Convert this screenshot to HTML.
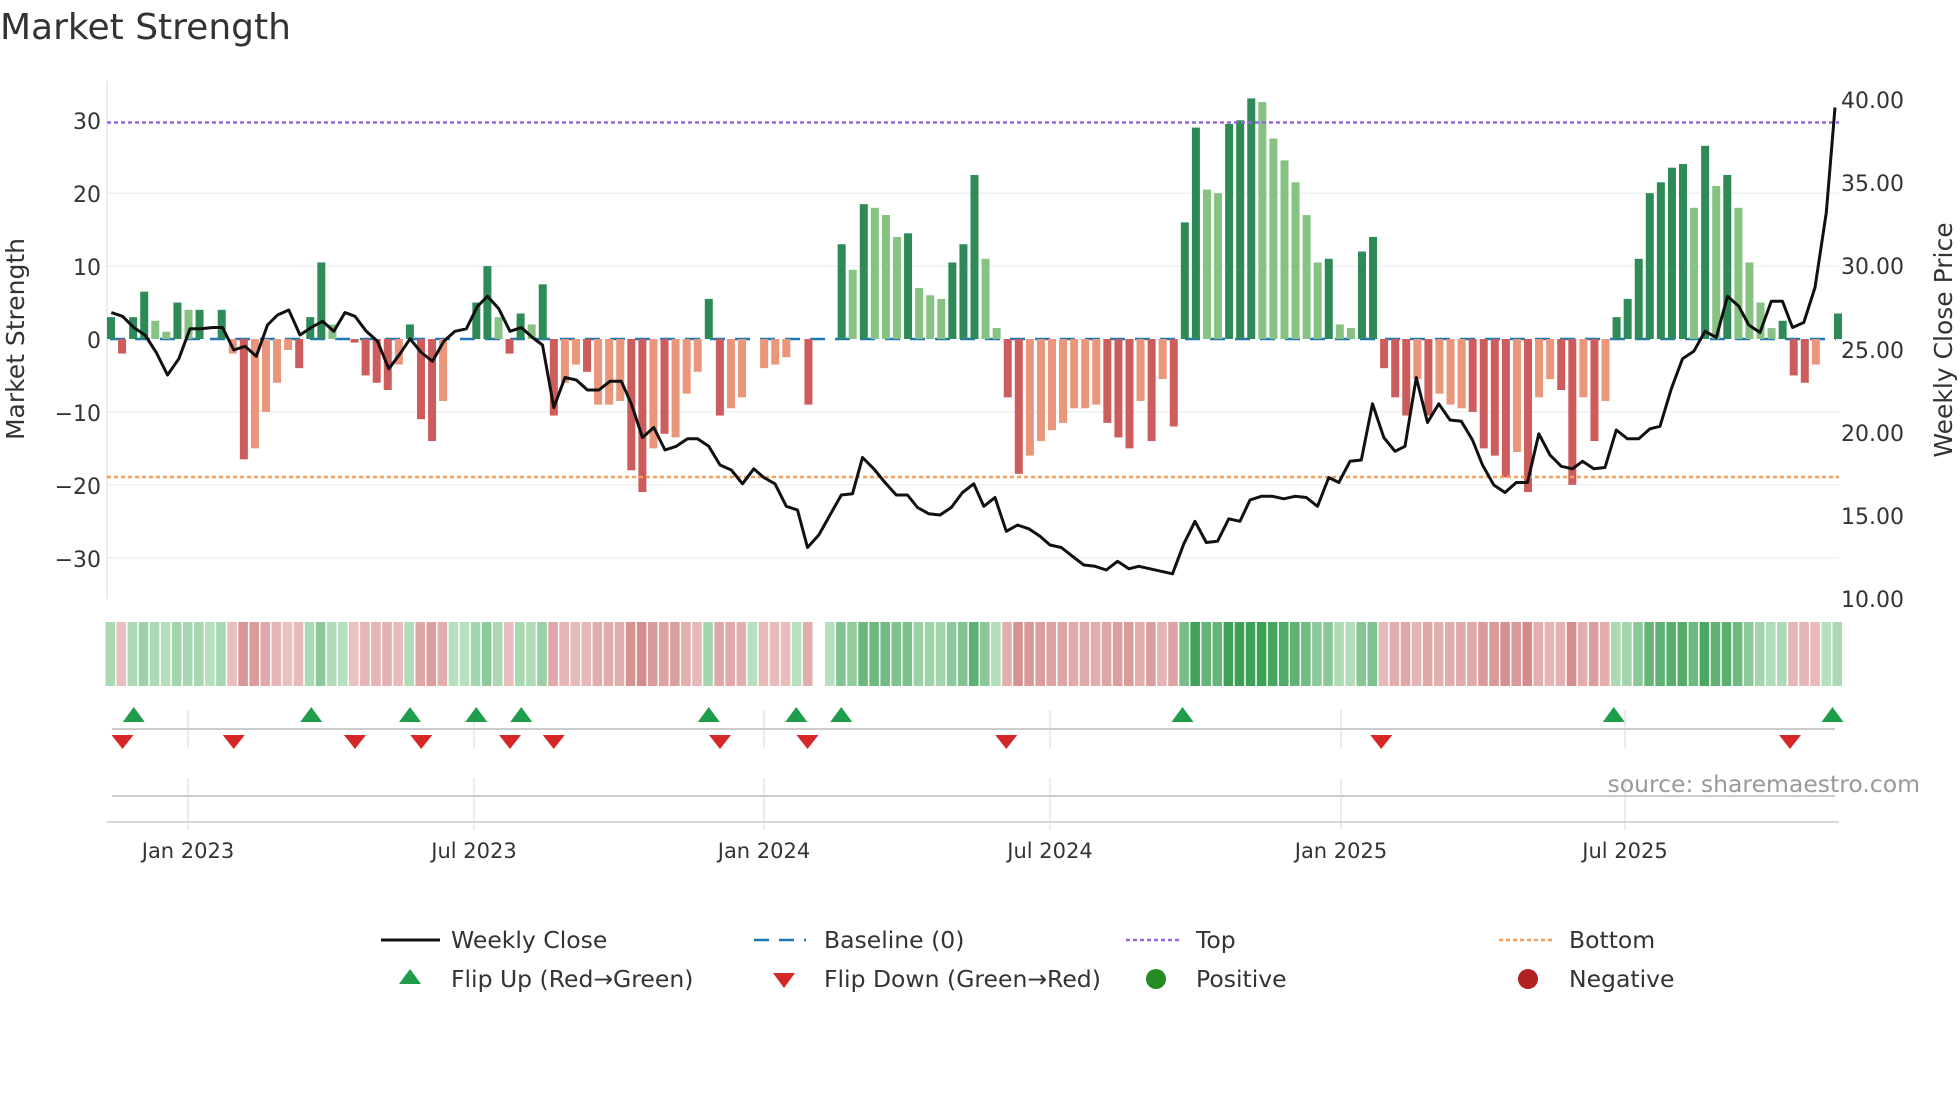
<!DOCTYPE html>
<html><head><meta charset="utf-8"><style>
html,body{margin:0;padding:0;background:#fff;width:1960px;height:1102px;overflow:hidden}
svg{display:block;font-family:"DejaVu Sans","Liberation Sans",sans-serif}
</style></head><body>
<svg id="s" width="1960" height="1102" viewBox="0 0 1960 1102">
<text x="0" y="39" font-size="36" fill="#333">Market Strength</text>
<g id="grid"></g>
<g id="bars"></g>
<g id="heat"></g>
<g id="mk"></g>
<g font-size="22" fill="#333">
<text x="101" y="129" text-anchor="end">30</text>
<text x="101" y="202" text-anchor="end">20</text>
<text x="101" y="275" text-anchor="end">10</text>
<text x="101" y="348" text-anchor="end">0</text>
<text x="101" y="421" text-anchor="end">−10</text>
<text x="101" y="494" text-anchor="end">−20</text>
<text x="101" y="567" text-anchor="end">−30</text>
<text x="1841" y="108">40.00</text>
<text x="1841" y="191">35.00</text>
<text x="1841" y="274">30.00</text>
<text x="1841" y="358">25.00</text>
<text x="1841" y="441">20.00</text>
<text x="1841" y="524">15.00</text>
<text x="1841" y="607">10.00</text>
</g>
<g font-size="21" fill="#333" text-anchor="middle">
<text x="188" y="858">Jan 2023</text>
<text x="474" y="858">Jul 2023</text>
<text x="764" y="858">Jan 2024</text>
<text x="1050" y="858">Jul 2024</text>
<text x="1341" y="858">Jan 2025</text>
<text x="1625" y="858">Jul 2025</text>
</g>
<text transform="translate(24,339) rotate(-90)" font-size="25" fill="#333" text-anchor="middle">Market Strength</text>
<text transform="translate(1952,340) rotate(-90)" font-size="25" fill="#333" text-anchor="middle">Weekly Close Price</text>
<text x="1920" y="792" font-size="23.5" fill="#999" text-anchor="end">source: sharemaestro.com</text>
<g font-size="23.5" fill="#333">
<line x1="381" y1="940" x2="440" y2="940" stroke="#111" stroke-width="3"/>
<text x="451" y="948">Weekly Close</text>
<line x1="754" y1="940" x2="806" y2="940" stroke="#1f77b4" stroke-width="2.5" stroke-dasharray="15,10"/>
<text x="824" y="948">Baseline (0)</text>
<line x1="1126" y1="940" x2="1181" y2="940" stroke="#9467dd" stroke-width="2.5" stroke-dasharray="4,3"/>
<text x="1196" y="948">Top</text>
<line x1="1499" y1="940" x2="1554" y2="940" stroke="#f4a05a" stroke-width="2.5" stroke-dasharray="4,3"/>
<text x="1569" y="948">Bottom</text>
<polygon points="410,969 399,984 421,984" fill="#1e9e4a"/>
<text x="451" y="987">Flip Up (Red→Green)</text>
<polygon points="773,973 795,973 784,988" fill="#d62728"/>
<text x="824" y="987">Flip Down (Green→Red)</text>
<circle cx="1156" cy="979" r="10" fill="#228b22"/>
<text x="1196" y="987">Positive</text>
<circle cx="1528" cy="979" r="10" fill="#b22222"/>
<text x="1569" y="987">Negative</text>
</g>
<polyline id="price" fill="none" stroke="#111" stroke-width="3" stroke-linejoin="round"/>
</svg>
<script>
var NS="http://www.w3.org/2000/svg";
function el(p,t,a){var e=document.createElementNS(NS,t);for(var k in a)e.setAttribute(k,a[k]);document.getElementById(p).appendChild(e);return e;}
var Y=function(v){return 339-v*7.29;};
[20,10,-10,-20,-30].forEach(function(v){el("grid","line",{x1:107,x2:1839,y1:Y(v),y2:Y(v),stroke:"#eef0f2","stroke-width":1.5});});
el("grid","line",{x1:107,x2:107,y1:81,y2:599,stroke:"#e6e6e6","stroke-width":1.5});
[188,474,764,1050,1341,1625].forEach(function(x){
 el("grid","line",{x1:x,x2:x,y1:710,y2:748,stroke:"#e6e6e6","stroke-width":1.5});
 el("grid","line",{x1:x,x2:x,y1:778,y2:830,stroke:"#e6e6e6","stroke-width":1.5});});
el("grid","line",{x1:112,x2:1835,y1:729,y2:729,stroke:"#ccc","stroke-width":2});
el("grid","line",{x1:112,x2:1835,y1:796,y2:796,stroke:"#ccc","stroke-width":2});
el("grid","line",{x1:107,x2:1839,y1:822,y2:822,stroke:"#ccc","stroke-width":1.5});
var d=[[3,1],[-2,1],[3,1],[6.5,1],[2.5,0],[1,0],[5,1],[4,0],[4,1],[0,0],[4,1],[-2,0],[-16.5,1],[-15,0],[-10,0],[-6,0],[-1.5,0],[-4,1],[3,1],[10.5,1],[2,0],[0,0],[-0.5,1],[-5,1],[-6,1],[-7,1],[-3.5,0],[2,1],[-11,1],[-14,1],[-8.5,0],[0,0],[0,0],[5,1],[10,1],[3,0],[-2,1],[3.5,1],[2,0],[7.5,1],[-10.5,1],[-6,0],[-3.5,0],[-4.5,1],[-9,0],[-9,0],[-8.5,0],[-18,1],[-21,1],[-15,0],[-13,1],[-13.5,0],[-7.5,0],[-4.5,0],[5.5,1],[-10.5,1],[-9.5,0],[-8,0],[0,0],[-4,0],[-3.5,0],[-2.5,0],[0,0],[-9,1],[null,0],[0,0],[13,1],[9.5,0],[18.5,1],[18,0],[17,0],[14,0],[14.5,1],[7,0],[6,0],[5.5,0],[10.5,1],[13,1],[22.5,1],[11,0],[1.5,0],[-8,1],[-18.5,1],[-16,0],[-14,0],[-12.5,0],[-11.5,0],[-9.5,0],[-9.5,0],[-9,0],[-11.5,1],[-13.5,1],[-15,1],[-8.5,0],[-14,1],[-5.5,0],[-12,1],[16,1],[29,1],[20.5,0],[20,0],[29.5,1],[30,1],[33,1],[32.5,0],[27.5,0],[24.5,0],[21.5,0],[17,0],[10.5,0],[11,1],[2,0],[1.5,0],[12,1],[14,1],[-4,1],[-8,1],[-10.5,1],[-5.5,0],[-10.5,1],[-7.5,0],[-9,0],[-9.5,0],[-10,1],[-15,1],[-16,1],[-19,1],[-15.5,0],[-21,1],[-8,0],[-5.5,0],[-7,1],[-20,1],[-8,0],[-14,1],[-8.5,0],[3,1],[5.5,1],[11,1],[20,1],[21.5,1],[23.5,1],[24,1],[18,0],[26.5,1],[21,0],[22.5,1],[18,0],[10.5,0],[5,0],[1.5,0],[2.5,1],[-5,1],[-6,1],[-3.5,0],[0,0],[3.5,1]];
var n=d.length,x0=111,x1=1838,dx=(x1-x0)/(n-1);
el("bars","line",{x1:110,x2:1836,y1:339,y2:339,stroke:"#1f77b4","stroke-width":2.5,"stroke-dasharray":"15,10"});
d.forEach(function(r,i){
 var v=r[0],x=x0+i*dx;
 if(v===null)return;
 if(v!==0){
  var c=v>0?(r[1]?"#2e8b57":"#86c282"):(r[1]?"#cd5c5c":"#e9967a");
  var y=Math.min(Y(v),339),h=Math.abs(v)*7.29;
  el("bars","rect",{x:x-4,y:y,width:8,height:h,fill:c});
 }
 var t=Math.min(Math.abs(v)/30,1),col;
 if(v>=0){var a=[205,235,209],b=[60,160,85];}else{var a=[242,210,210],b=[200,115,115];}
 col="rgb("+a.map(function(q,k){return Math.round(q+(b[k]-q)*(0.15+0.85*t));}).join(",")+")";
 el("heat","rect",{x:x-dx/2,y:622,width:dx-1.5,height:64,fill:col});
});
el("bars","line",{x1:107,x2:1839,y1:122.5,y2:122.5,stroke:"#9467dd","stroke-width":2.5,"stroke-dasharray":"4,3"});
el("bars","line",{x1:107,x2:1839,y1:477,y2:477,stroke:"#f4a05a","stroke-width":2.5,"stroke-dasharray":"4,3"});
[107,249,328,381,417,567,637,673,946,1291,1466].forEach(function(x){x*=1.25;el("mk","polygon",{points:(x)+",707 "+(x-11)+",722 "+(x+11)+",722",fill:"#1e9e4a"});});
[98,187,284,337,408,443,576,646,805,1105,1432].forEach(function(x){x*=1.25;el("mk","polygon",{points:(x-11)+",735 "+(x+11)+",735 "+x+",749",fill:"#d62728"});});
var p=[89,250,98,253,107,262,116,268,125,282,134,300,143,287,152,263,161,263,170,262,178,262,187,280,196,277,205,285,214,260,222,252,231,248,240,268,249,262,258,257,267,265,276,250,284,253,293,265,302,273,311,295,320,283,328,271,337,282,346,289,355,273,364,265,373,263,382,245,390,237,399,247,408,265,417,262,426,270,434,276,443,326,452,302,461,304,470,312,479,312,488,305,497,305,505,323,514,350,523,342,532,360,541,357,550,351,558,351,567,357,576,372,585,376,594,387,603,375,611,382,620,387,629,405,638,408,646,438,655,428,664,412,673,396,682,395,690,366,699,375,708,386,717,396,726,396,734,406,743,411,752,412,761,406,770,394,779,387,787,405,796,398,805,425,814,420,823,423,832,429,840,436,849,438,858,445,867,452,876,453,885,456,894,449,903,455,911,453,920,455,929,457,938,459,947,435,956,417,965,434,974,433,983,415,992,417,1000,400,1009,397,1018,397,1027,399,1036,397,1045,398,1054,405,1063,382,1071,386,1080,369,1089,368,1098,323,1107,350,1116,361,1124,357,1133,302,1142,338,1151,323,1160,336,1169,337,1178,352,1186,372,1195,388,1204,394,1213,386,1222,386,1231,347,1240,364,1249,373,1258,375,1266,369,1275,375,1284,374,1293,344,1302,351,1311,351,1320,343,1328,341,1337,311,1346,287,1355,281,1364,265,1373,270,1382,237,1391,245,1399,260,1408,266,1417,241,1426,241,1434,262,1443,258,1452,230,1461,170,1468,86];
var s=[];for(var i=0;i<p.length;i+=2)s.push((p[i]*1.25).toFixed(1)+","+(p[i+1]*1.25).toFixed(1));
document.getElementById("price").setAttribute("points",s.join(" "));
</script>
</body></html>
